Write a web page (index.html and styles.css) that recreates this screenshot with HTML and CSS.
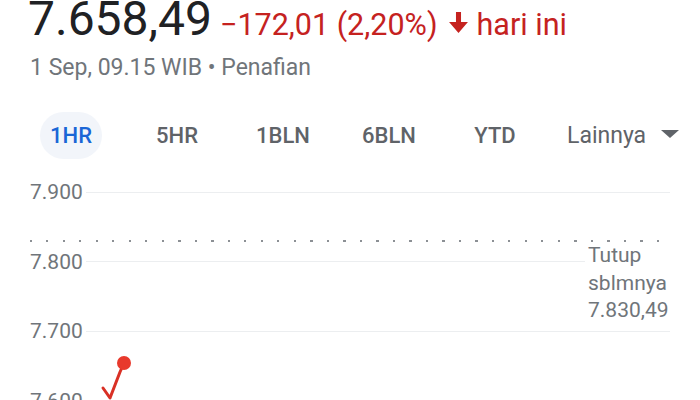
FILE: index.html
```html
<!DOCTYPE html>
<html lang="id">
<head>
    <meta charset="UTF-8">
    <meta name="viewport" content="width=device-width, initial-scale=1.0">
    <title>Saham</title>
    <link rel="stylesheet" href="styles.css">
</head>
<body>
    <div class="quote">
        <div class="price-row">
            <span class="price">7.658,49</span>
            <span class="change">−172,01 (2,20%)</span>
            <svg class="arrow" viewBox="0 0 20 20" width="21" height="21">
                <path d="M7.6 0h4.8v9.5H19L10 20 1 9.5h6.6z" fill="#c5221f"/>
            </svg>
            <span class="change">hari ini</span>
        </div>
        <div class="meta">1 Sep, 09.15 WIB • Penafian</div>
    </div>

    <div class="tabs">
        <span class="tab active">1HR</span>
        <span class="tab">5HR</span>
        <span class="tab">1BLN</span>
        <span class="tab">6BLN</span>
        <span class="tab">YTD</span>
        <span class="tab more">Lainnya <i class="caret"></i></span>
    </div>

    <div class="chart">
        <div class="row"><span class="label">7.900</span><span class="line"></span></div>
        <div class="row"><span class="label">7.800</span><span class="line"></span></div>
        <div class="row"><span class="label">7.700</span><span class="line"></span></div>
        <div class="row last"><span class="label">7.600</span><span class="line"></span></div>

        <div class="prev-line"></div>
        <div class="prev-close">Tutup<br>sblmnya<br>7.830,49</div>
        <svg class="series" width="640" height="230">
            <polyline points="73,206 80,216 90,190 94,181" fill="none" stroke="#d93025" stroke-width="3" stroke-linejoin="round" stroke-linecap="round"/>
            <circle cx="94" cy="181" r="7" fill="#e8392c"/>
        </svg>
    </div>
</body>
</html>
```

FILE: styles.css
```css
body {
    margin: 0;
    padding: 0 30px 0 28px;
    font-family: Roboto, "Liberation Sans", sans-serif;
    background: #ffffff;
    color: #202124;
    overflow: hidden;
}
.quote {
    margin-top: -5px;
}
.price-row {
    display: flex;
    align-items: baseline;
    height: 48px;
}
.price {
    font-size: 48px;
    line-height: 48px;
    color: #202124;
}
.change {
    font-size: 30.5px;
    color: #c5221f;
    margin-left: 8px;
}
.arrow {
    margin-left: 10px;
    align-self: center;
    position: relative;
    top: 3px;
}
.meta {
    margin-top: 12px;
    font-size: 23px;
    line-height: 26px;
    color: #70757a;
    padding-left: 2px;
}
.tabs {
    display: flex;
    align-items: center;
    gap: 44px;
    margin-top: 31px;
    padding-left: 12px;
}
.tab {
    flex-shrink: 0;
    width: 62px;
    height: 47px;
    border-radius: 24px;
    display: flex;
    align-items: center;
    justify-content: center;
    font-size: 22px;
    font-weight: 500;
    color: #5f6368;
    white-space: nowrap;
}
.tab.active {
    background: #f2f5fa;
    color: #1a66d6;
}
.tab.more {
    width: auto;
    margin-left: -3px;
    font-weight: 400;
    font-size: 23px;
}
.caret {
    display: inline-block;
    margin-left: 15px;
    border-left: 9px solid transparent;
    border-right: 9px solid transparent;
    border-top: 8px solid #5f6368;
    position: relative;
    top: -2px;
}
.chart {
    position: relative;
    margin-top: 23px;
    margin-left: 2px;
    display: flex;
    flex-direction: column;
    gap: 49.5px;
}
.row {
    display: flex;
    align-items: center;
    height: 20px;
}
.label {
    width: 56px;
    font-size: 21px;
    line-height: 20px;
    color: #70757a;
}
.line {
    flex: 1;
    height: 1px;
    background: #eceef0;
}
.row.last .line {
    height: 2px;
    background: #a8acb0;
}
.prev-line {
    position: absolute;
    top: 58px;
    left: 0;
    right: 0;
    height: 2px;
    background: repeating-linear-gradient(to right, #8c9095 0 2px, transparent 2px 16.5px);
    z-index: 2;
}
.prev-close {
    position: absolute;
    top: 60px;
    left: 555px;
    right: 0;
    padding-left: 3px;
    background: #ffffff;
    font-size: 21px;
    line-height: 27.5px;
    color: #70757a;
}
.series {
    position: absolute;
    left: 0;
    top: 0;
    overflow: visible;
}
```
